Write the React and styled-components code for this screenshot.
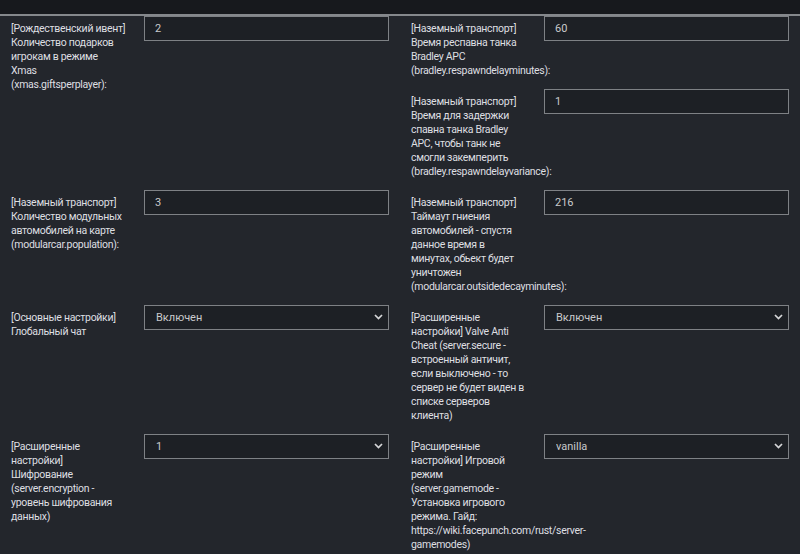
import React from 'react';
import styled, {createGlobalStyle} from "styled-components";

const GlobalStyle = createGlobalStyle`
  html, body {
    margin: 0;
    padding: 0;
    background: #23262c;
    overflow: hidden;
  }
  body {
    font-family: Roboto, "Liberation Sans", sans-serif;
    color: #dedfe1;
  }
`;

// label lines are kept as they break in the original form
const rows = [
    {
        left: [
            {lines: ['[Рождественский ивент]', 'Количество подарков', 'игрокам в режиме', 'Xmas', '(xmas.giftsperplayer):'], value: '2'},
        ],
        right: [
            {lines: ['[Наземный транспорт]', 'Время респавна танка', 'Bradley APC', '(bradley.respawndelayminutes):'], value: '60'},
            {lines: ['[Наземный транспорт]', 'Время для задержки', 'спавна танка Bradley', 'APC, чтобы танк не', 'смогли закемперить', '(bradley.respawndelayvariance):'], value: '1'},
        ],
    },
    {
        left: [
            {lines: ['[Наземный транспорт]', 'Количество модульных', 'автомобилей на карте', '(modularcar.population):'], value: '3'},
        ],
        right: [
            {lines: ['[Наземный транспорт]', 'Таймаут гниения', 'автомобилей - спустя', 'данное время в', 'минутах, обьект будет', 'уничтожен', '(modularcar.outsidedecayminutes):'], value: '216'},
        ],
    },
    {
        left: [
            {lines: ['[Основные настройки]', 'Глобальный чат'], options: ['Включен', 'Выключен']},
        ],
        right: [
            {lines: ['[Расширенные', 'настройки] Valve Anti', 'Cheat (server.secure -', 'встроенный античит,', 'если выключено - то', 'сервер не будет виден в', 'списке серверов', 'клиента)'], options: ['Включен', 'Выключен']},
        ],
    },
    {
        left: [
            {lines: ['[Расширенные', 'настройки]', 'Шифрование', '(server.encryption -', 'уровень шифрования', 'данных)'], options: ['1', '0', '2']},
        ],
        right: [
            {lines: ['[Расширенные', 'настройки] Игровой', 'режим', '(server.gamemode -', 'Установка игрового', 'режима. Гайд:', 'https://wiki.facepunch.com/rust/server-', 'gamemodes)'], options: ['vanilla', 'softcore', 'hardcore']},
        ],
    },
];

const Chevron = () => (
    <svg width="9" height="6" viewBox="0 0 9 6">
        <path d="M1 1l3.5 3.5L8 1" fill="none" stroke="#d6d7d9" strokeWidth="1.7"/>
    </svg>
);

const Field = ({lines, value, options}) => (
    <FieldRow>
        <Label>
            {lines.map((l, i) => <LabelLine key={i}>{l}</LabelLine>)}
        </Label>
        <Control>
            {options ? (
                <SelectWrap>
                    <Select defaultValue={options[0]}>
                        {options.map(o => <option key={o}>{o}</option>)}
                    </Select>
                    <Arrow><Chevron/></Arrow>
                </SelectWrap>
            ) : (
                <Input defaultValue={value}/>
            )}
        </Control>
    </FieldRow>
);

const App = () => {
    return (
        <>
            <GlobalStyle/>
            <TopBar/>
            <Form>
                {rows.map((row, i) => (
                    <Row key={i}>
                        <Column>
                            {row.left.map(f => <Field key={f.lines.join()} {...f}/>)}
                        </Column>
                        <Column>
                            {row.right.map(f => <Field key={f.lines.join()} {...f}/>)}
                        </Column>
                    </Row>
                ))}
            </Form>
        </>
    );
}

const TopBar = styled.div`
  height: 14px;
  background: #17191d;
  border-bottom: 2px solid #85888c;
`;

const Form = styled.div`
  display: flex;
  flex-direction: column;
`;

const Row = styled.div`
  display: flex;
`;

const Column = styled.div`
  width: 400px;
  display: flex;
  flex-direction: column;
`;

const FieldRow = styled.div`
  display: grid;
  grid-template-columns: 133px 267px;
`;

const Label = styled.div`
  padding: 6px 11px 11px 11px;
  font-size: 10.5px;
  letter-spacing: -0.3px;
  line-height: 14px;
  color: #dedfe1;
`;

const LabelLine = styled.div`
  white-space: nowrap;
`;

const Control = styled.div`
  padding: 0 11px;
`;

const fieldStyles = `
  box-sizing: border-box;
  width: 100%;
  height: 25px;
  margin: 0;
  padding: 0 10px;
  background: #1d2025;
  border: 1px solid #7e8185;
  border-radius: 0;
  color: #c9cacc;
  font-family: Roboto, "Liberation Sans", sans-serif;
  font-size: 11px;
  outline: none;
`;

const Input = styled.input`
  ${fieldStyles}
`;

const SelectWrap = styled.div`
  position: relative;
`;

const Select = styled.select`
  ${fieldStyles}
  padding-left: 11px;
  appearance: none;
  -webkit-appearance: none;
`;

const Arrow = styled.span`
  position: absolute;
  right: 6px;
  top: 9px;
  display: flex;
  pointer-events: none;
`;

export default App;
